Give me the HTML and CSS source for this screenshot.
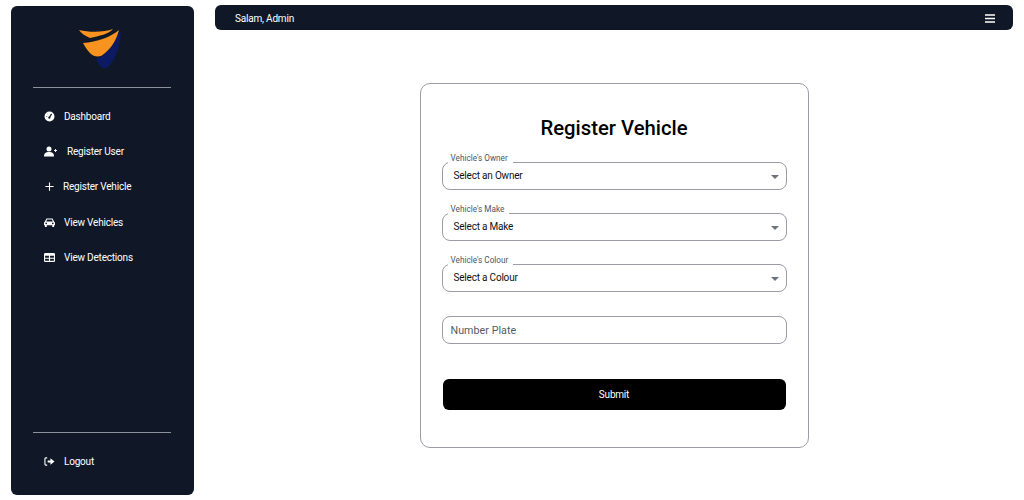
FILE: index.html
```html
<!DOCTYPE html>
<html lang="en">
<head>
    <meta charset="UTF-8">
    <title>Register Vehicle</title>
    <link rel="stylesheet" href="styles.css">
</head>
<body>
    <aside class="sidebar">
        <div class="logo">
            <svg width="44" height="42" viewBox="0 0 44 42">
                <path d="M42 3 C41 18 36 32 28 39 C24 40 20 38 17 30 C28 26 36 14 40 3 Z" fill="#0b1a63"/>
                <path d="M0 1 C12 4 26 3 34 0 C30 5 20 7 11 9 C6 7 2 4 0 1 Z" fill="#f7931e"/>
                <path d="M4 14 C18 13 32 8 40 1 C37 13 30 22 22 27 C15 29 10 25 4 14 Z" fill="#f7931e"/>
            </svg>
        </div>
        <hr class="rule">
        <nav class="menu">
            <a class="menu-item">
                <svg class="icon" viewBox="0 0 12 12"><circle cx="6" cy="6" r="5.4" fill="#fff"/><path d="M6 7 L8.3 3.2" stroke="#101828" stroke-width="1.3"/><circle cx="5.8" cy="7.3" r="1.2" fill="#101828"/><path d="M2.5 6h1M4 3.5l.5.5" stroke="#101828" stroke-width=".8"/></svg>
                <span>Dashboard</span>
            </a>
            <a class="menu-item item-user">
                <svg class="icon icon-wide" viewBox="0 0 13 10"><circle cx="5" cy="2.6" r="2.5" fill="#fff"/><path d="M0 10 C0 6.8 2 5.6 5 5.6 C8 5.6 10 6.8 10 10 Z" fill="#fff"/><path d="M10 4h3M11.5 2.5v3" stroke="#fff" stroke-width=".9"/></svg>
                <span>Register User</span>
            </a>
            <a class="menu-item item-plus">
                <svg class="icon" viewBox="0 0 12 12"><path d="M6 1.5v9M1.5 6h9" stroke="#fff" stroke-width="1.2"/></svg>
                <span>Register Vehicle</span>
            </a>
            <a class="menu-item">
                <svg class="icon" viewBox="0 0 12 10"><path d="M2.7 0.5 H9.3 L11 4 Q12 4.6 12 5.6 V8 H11 V10 H9 V8 H3 V10 H1 V8 H0 V5.6 Q0 4.6 1 4 Z" fill="#fff"/><path d="M3.4 1.6 H8.6 L9.6 3.9 H2.4 Z" fill="#101828"/><circle cx="2.4" cy="6" r=".9" fill="#101828"/><circle cx="9.6" cy="6" r=".9" fill="#101828"/></svg>
                <span>View Vehicles</span>
            </a>
            <a class="menu-item">
                <svg class="icon" viewBox="0 0 12 10"><rect width="12" height="10" rx="1.4" fill="#fff"/><path d="M1.2 3.2h4.2v2.1H1.2zM6.6 3.2h4.2v2.1H6.6zM1.2 6.3h4.2v2.3H1.2zM6.6 6.3h4.2v2.3H6.6z" fill="#101828"/></svg>
                <span>View Detections</span>
            </a>
        </nav>
        <hr class="rule rule-bottom">
        <a class="menu-item logout">
            <svg class="icon" viewBox="0 0 12 10"><path d="M3.5 1 H2 Q1 1 1 2 V8 Q1 9 2 9 H3.5" fill="none" stroke="#fff" stroke-width="1.2"/><path d="M4 3.8 H7 V1.5 L11.5 5 L7 8.5 V6.2 H4 Z" fill="#fff"/></svg>
            <span>Logout</span>
        </a>
    </aside>

    <main class="main">
        <header class="topbar">
            <span>Salam, Admin</span>
            <svg class="burger" viewBox="0 0 10 9"><path d="M0 1h10M0 4.5h10M0 8h10" stroke="#fff" stroke-width="1.4"/></svg>
        </header>

        <div class="content">
            <form class="card">
                <h1>Register Vehicle</h1>

                <fieldset class="field">
                    <legend>Vehicle's Owner</legend>
                    <div class="select-value">Select an Owner</div>
                </fieldset>
                <fieldset class="field">
                    <legend>Vehicle's Make</legend>
                    <div class="select-value">Select a Make</div>
                </fieldset>
                <fieldset class="field">
                    <legend>Vehicle's Colour</legend>
                    <div class="select-value">Select a Colour</div>
                </fieldset>

                <input class="plate" type="text" placeholder="Number Plate">
                <button class="submit" type="button">Submit</button>
            </form>
        </div>
    </main>
</body>
</html>
```

FILE: styles.css
```css
:root {
    --navy: #101828;
    --border: #9a9ca8;
}

* {
    box-sizing: border-box;
}

html, body {
    height: 100%;
}

body {
    margin: 0;
    padding: 5px 11px 5px 11px;
    display: flex;
    gap: 21px;
    background: #fff;
    font-family: Roboto, "Liberation Sans", sans-serif;
    overflow: hidden;
}

.sidebar {
    width: 183px;
    margin-top: 1px;
    flex-shrink: 0;
    display: flex;
    flex-direction: column;
    padding: 0 23px 0 22px;
    background: var(--navy);
    border-radius: 6px;
    color: #fff;
}

.logo {
    height: 81px;
    padding: 23px 0 0 46px;
}

.rule {
    width: 100%;
    margin: 0;
    border: 0;
    border-top: 1px solid #8d919c;
}

.menu {
    flex: 1;
    display: flex;
    flex-direction: column;
    padding-top: 11px;
}

.menu-item {
    height: 35.2px;
    display: flex;
    align-items: center;
    gap: 9px;
    padding-left: 11px;
    font-size: 10px;
    letter-spacing: -0.2px;
    color: #fff;
}

.icon {
    width: 11px;
    height: 11px;
    flex-shrink: 0;
}

.icon-wide {
    width: 13px;
}

.item-user {
    gap: 10px;
}

.item-plus {
    gap: 8px;
}

.logout {
    margin-top: 11px;
    margin-bottom: 16px;
}

.main {
    flex: 1;
    display: flex;
    flex-direction: column;
    min-width: 0;
}

.topbar {
    height: 25px;
    display: flex;
    justify-content: space-between;
    align-items: center;
    padding: 1px 18px 0 20px;
    background: var(--navy);
    border-radius: 6px;
    color: #fff;
    font-size: 10px;
    letter-spacing: -0.2px;
}

.burger {
    width: 10px;
    height: 9px;
}

.content {
    display: flex;
    justify-content: center;
    padding-top: 53px;
}

.card {
    width: 389px;
    height: 365px;
    padding: 32px 21px 0;
    border: 1px solid var(--border);
    border-radius: 10px;
}

h1 {
    margin: 0 0 13px;
    text-align: center;
    font-size: 20.3px;
    font-weight: 500;
    line-height: 24px;
    color: #000;
}

/* legend is taller than the text so the border sits below the label */
.field {
    height: 37px;
    margin: 0 0 14px;
    padding: 0 30px 0 11px;
    border: 1px solid var(--border);
    border-radius: 8px;
    position: relative;
}

.field::after {
    content: "";
    position: absolute;
    right: 7px;
    top: 4px;
    border-left: 4.5px solid transparent;
    border-right: 4.5px solid transparent;
    border-top: 4.5px solid #6b7280;
}

legend {
    margin-left: -6px;
    padding: 0 5px 8px 3px;
    font-size: 8.2px;
    line-height: 10px;
    color: #4b5563;
}

.select-value {
    font-size: 10px;
    letter-spacing: -0.2px;
    line-height: 10px;
    color: #111;
}

.plate {
    display: block;
    width: 100%;
    height: 28px;
    margin-top: 24px;
    padding: 0 8px;
    border: 1px solid var(--border);
    border-radius: 8px;
    font-family: inherit;
    font-size: 10.7px;
    letter-spacing: 0.05px;
    outline: none;
}

.plate::placeholder {
    color: #555b66;
}

.submit {
    display: block;
    width: 343px;
    height: 31px;
    margin: 35px 0 0 1px;
    border: 0;
    border-radius: 6px;
    background: #000;
    color: #fff;
    font-family: inherit;
    font-size: 10px;
    letter-spacing: -0.2px;
}
```
